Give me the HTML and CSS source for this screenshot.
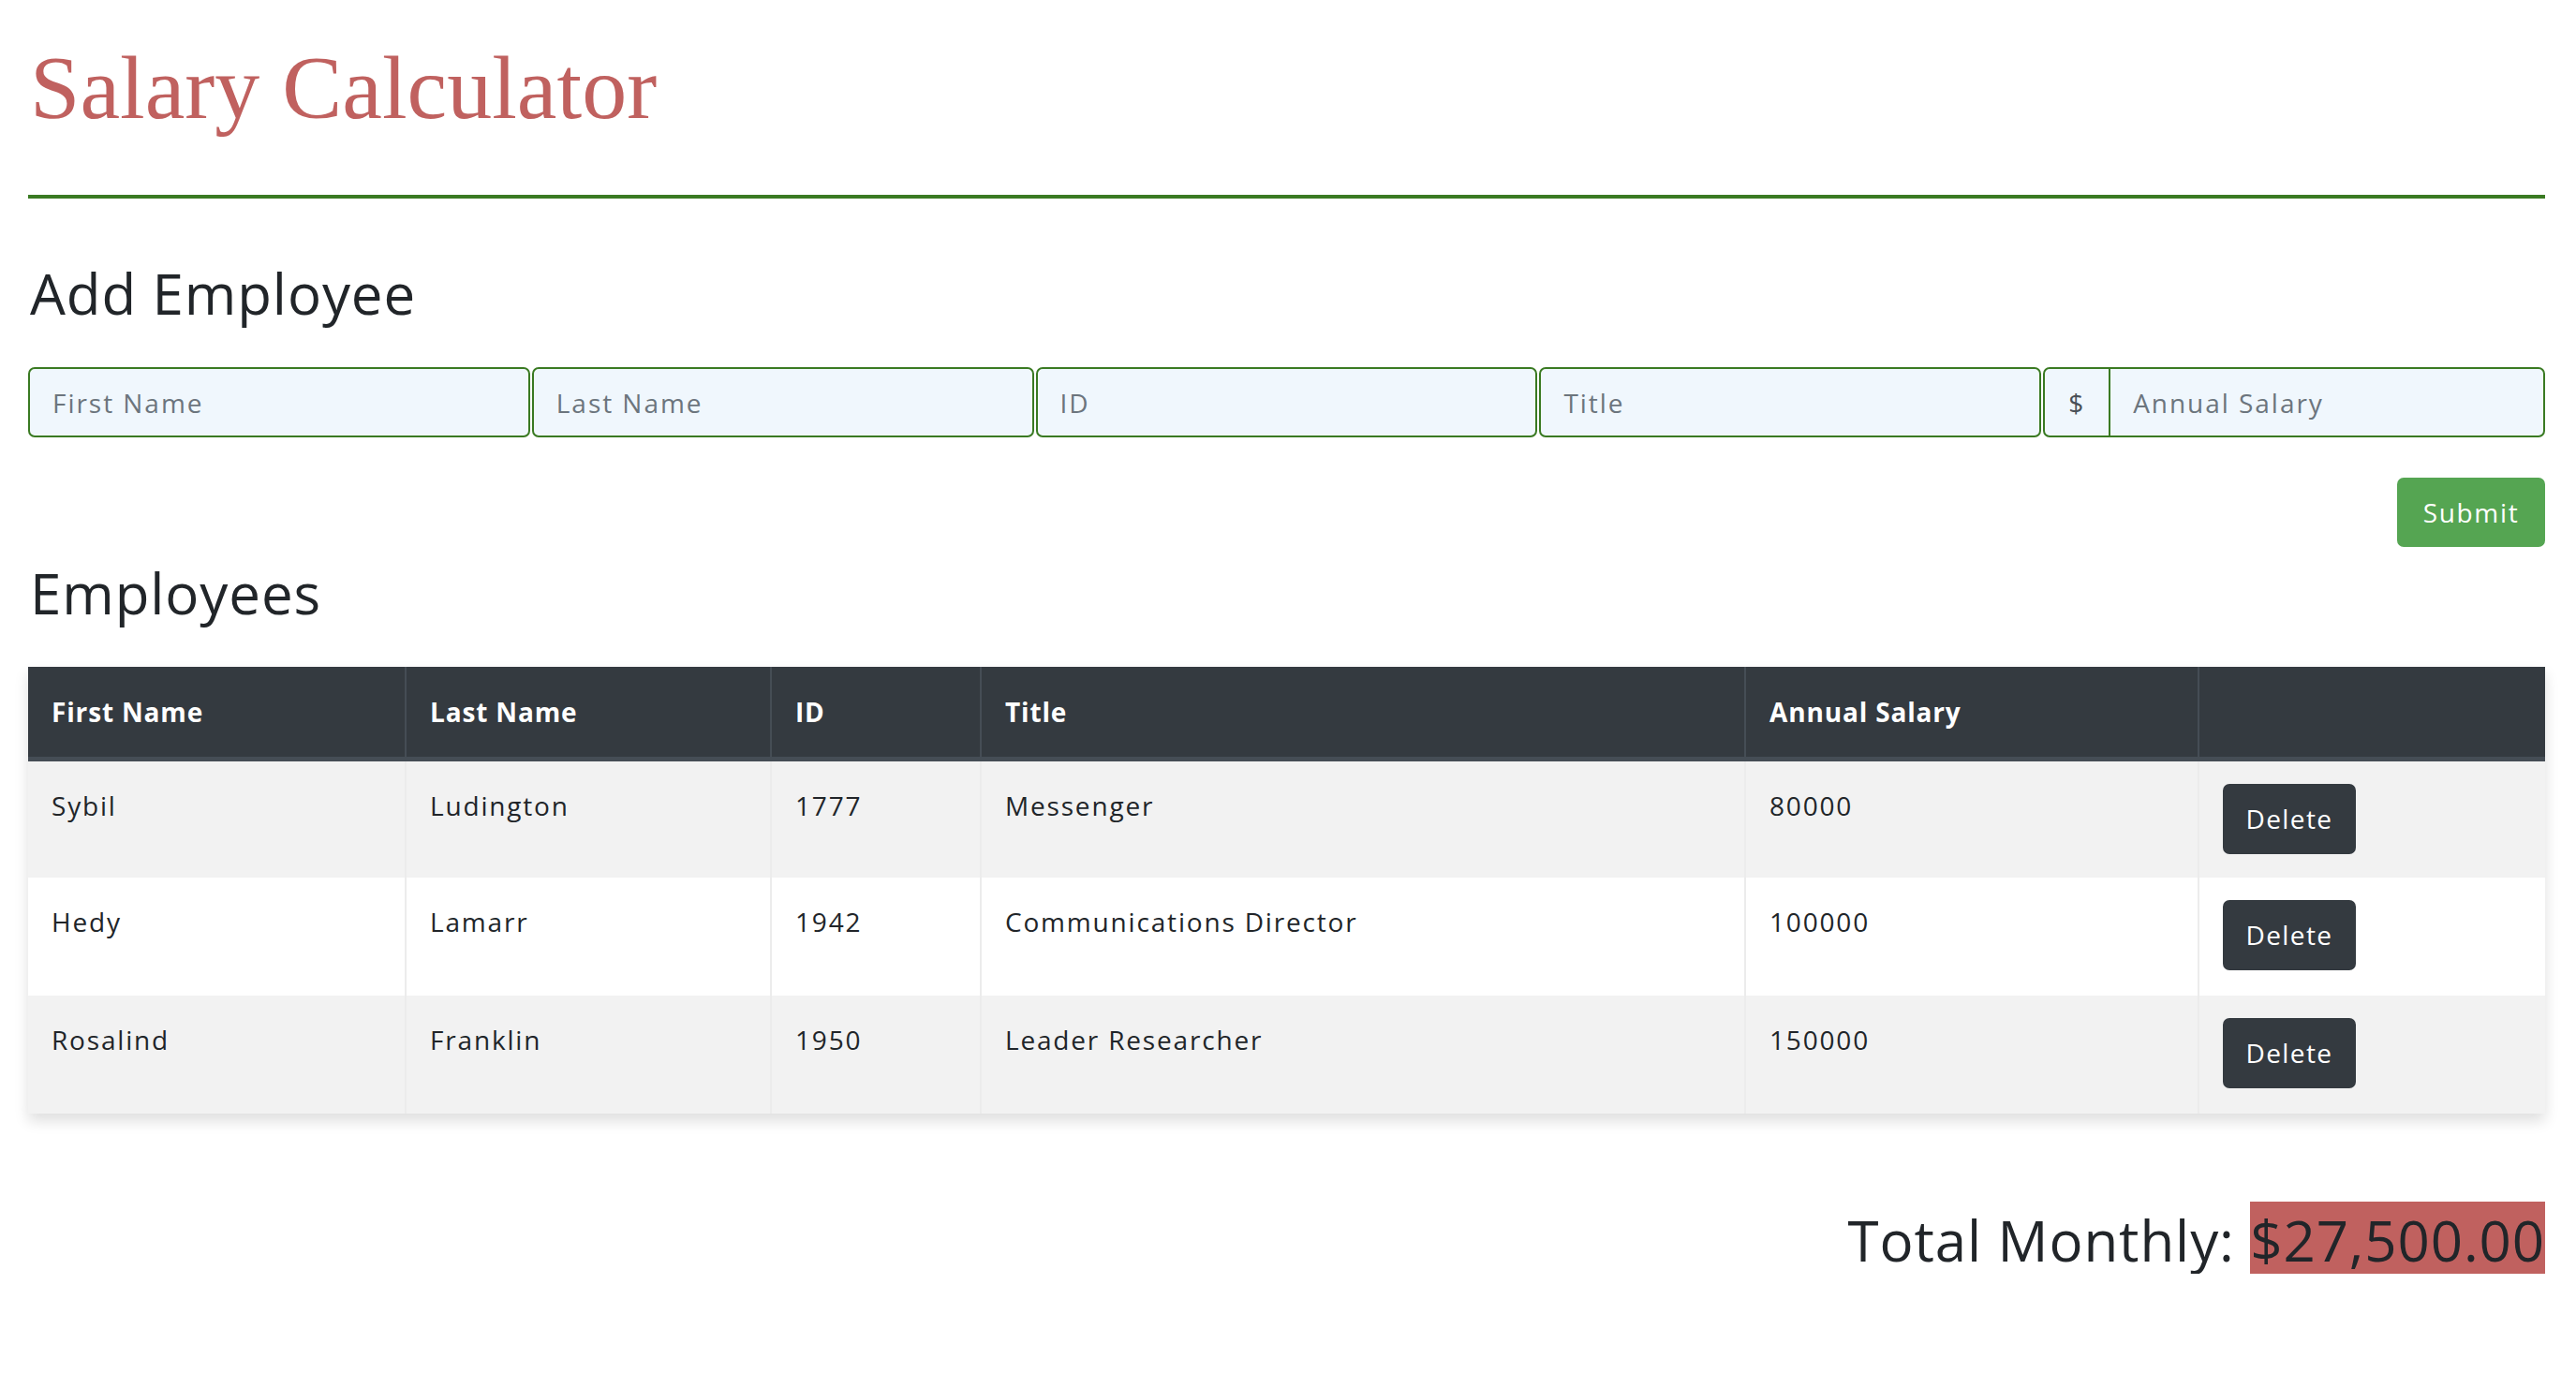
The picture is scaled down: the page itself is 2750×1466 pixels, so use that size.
FILE: index.html
```html
<!DOCTYPE html>
<html lang="en">
<head>
<meta charset="utf-8">
<title>Salary Calculator</title>
<link rel="stylesheet" href="styles.css">
</head>
<body>
<div class="page">
  <h1 class="title">Salary Calculator</h1>
  <hr class="rule">
  <h2 class="section-title add-title">Add Employee</h2>
  <form class="emp-form">
    <div class="fields">
      <input class="field" type="text" placeholder="First Name">
      <input class="field" type="text" placeholder="Last Name">
      <input class="field" type="text" placeholder="ID">
      <input class="field" type="text" placeholder="Title">
      <div class="salary-group">
        <span class="addon">$</span>
        <input class="field field-salary" type="text" placeholder="Annual Salary">
      </div>
    </div>
    <div class="actions">
      <button class="btn-submit" type="button">Submit</button>
    </div>
  </form>
  <h2 class="section-title emp-title">Employees</h2>
  <table class="emp-table">
    <colgroup>
      <col class="c1"><col class="c2"><col class="c3"><col class="c4"><col class="c5"><col class="c6">
    </colgroup>
    <thead>
      <tr><th>First Name</th><th>Last Name</th><th>ID</th><th>Title</th><th>Annual Salary</th><th></th></tr>
    </thead>
    <tbody>
      <tr><td>Sybil</td><td>Ludington</td><td>1777</td><td>Messenger</td><td>80000</td><td><button class="btn-delete" type="button">Delete</button></td></tr>
      <tr><td>Hedy</td><td>Lamarr</td><td>1942</td><td>Communications Director</td><td>100000</td><td><button class="btn-delete" type="button">Delete</button></td></tr>
      <tr><td>Rosalind</td><td>Franklin</td><td>1950</td><td>Leader Researcher</td><td>150000</td><td><button class="btn-delete" type="button">Delete</button></td></tr>
    </tbody>
  </table>
  <div class="total">Total Monthly: <span class="total-amount">$27,500.00</span></div>
</div>
</body>
</html>
```
FILE: styles.css
```css
* { box-sizing: border-box; }
html, body { margin: 0; padding: 0; background: #fff; }
body {
  font-family: "Open Sans", "Noto Sans", sans-serif;
  font-size: 28px;
  line-height: 1.5;
  color: #212529;
  letter-spacing: 0.065em;
}
.page {
  padding: 0 33px 0 30px;
}
.title {
  margin: 36px 0 0 2px;
  font-family: "Liberation Serif", "DejaVu Serif", serif;
  font-weight: 400;
  font-size: 96px;
  line-height: 1.2;
  color: #c0615f;
  letter-spacing: 0;
}
.rule {
  margin: 57px 0 0 0;
  border: 0;
  height: 4px;
  background: #3a7a22;
}
.section-title {
  font-weight: 400;
  font-size: 60px;
  line-height: 70px;
  margin: 0 0 0 2px;
  letter-spacing: 0.015em;
}
.add-title { margin-top: 66px; }
.emp-form { margin-top: 44px; }
.fields {
  display: grid;
  grid-template-columns: repeat(5, 1fr);
  gap: 2px;
}
.field {
  height: 75px;
  border: 2px solid #3a7a22;
  border-radius: 7px;
  background: #f0f7fd;
  font-family: inherit;
  font-size: 28px;
  letter-spacing: 0.07em;
  padding: 0 24px;
  color: #495057;
  width: 100%;
  min-width: 0;
  outline: none;
}
.field::placeholder { color: #6c757d; }
.salary-group {
  display: flex;
  height: 75px;
}
.addon {
  flex: 0 0 71px;
  display: flex;
  align-items: center;
  justify-content: center;
  border: 2px solid #3a7a22;
  border-right: 1px solid #3a7a22;
  border-radius: 7px 0 0 7px;
  background: #f0f7fd;
  color: #495057;
}
.field-salary {
  flex: 1;
  border-left: 1px solid #3a7a22;
  border-radius: 0 7px 7px 0;
}
.actions {
  display: flex;
  justify-content: flex-end;
  margin-top: 43px;
}
.btn-submit {
  height: 74px;
  width: 158px;
  border: 0;
  border-radius: 7px;
  background: #55a552;
  color: #fff;
  font-family: inherit;
  font-size: 28px;
  letter-spacing: 0.06em;
}
.emp-title { margin-top: 14px; }
.emp-table {
  margin-top: 44px;
  width: 100%;
  border-collapse: collapse;
  table-layout: fixed;
  box-shadow: 0 8px 14px rgba(0,0,0,0.13);
}
.c1 { width: 403px; }
.c2 { width: 390px; }
.c3 { width: 224px; }
.c4 { width: 816px; }
.c5 { width: 484px; }
.emp-table th {
  background: #343a40;
  color: #fff;
  text-align: left;
  font-weight: 700;
  height: 98px;
  padding: 0 25px;
  border-left: 2px solid #454d55;
  border-bottom: 5px solid #454d55;
  letter-spacing: 0.03em;
}
.emp-table th:first-child { border-left: 0; }
.emp-table td {
  vertical-align: top;
  height: 126px;
  padding: 25px 25px;
  line-height: 44px;
  border-left: 2px solid #ececec;
}
.emp-table td:first-child { border-left: 0; }
.emp-table tbody tr:nth-child(odd) td { background: #f2f2f2; }
.emp-table tbody tr:nth-child(even) td { background: #fff; }
.emp-table td:last-child { padding-top: 24px; }
.btn-delete {
  height: 75px;
  width: 142px;
  border: 0;
  border-radius: 7px;
  background: #343a40;
  color: #fff;
  font-family: inherit;
  font-size: 28px;
  letter-spacing: 0.05em;
}
.total {
  margin-top: 99px;
  text-align: right;
  font-size: 60px;
  line-height: 1.2;
  letter-spacing: 0.015em;
}
.total-amount {
  background: #c0615f;
}
```
